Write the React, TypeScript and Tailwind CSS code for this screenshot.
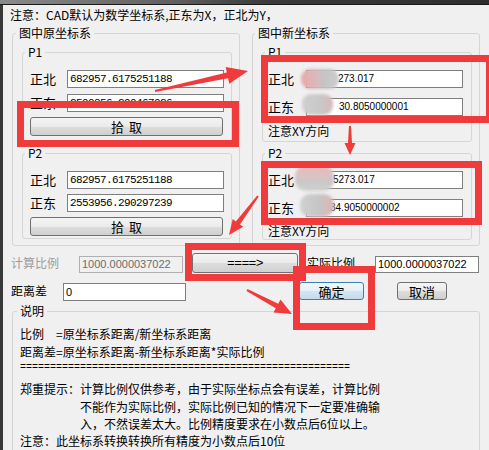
import React from 'react';

const RED = '#ef3b3b';

type Arrow = { x1: number; y1: number; x2: number; y2: number; head: number; wing: number; tail: number; neck: number };

// tapered annotation arrow: thin tail, wide head
function arrowPoints(a: Arrow) {
  const dx = a.x2 - a.x1;
  const dy = a.y2 - a.y1;
  const len = Math.hypot(dx, dy);
  const ux = dx / len;
  const uy = dy / len;
  const nx = -uy;
  const ny = ux;
  const bx = a.x2 - ux * a.head;
  const by = a.y2 - uy * a.head;
  const p = (x: number, y: number) => `${x.toFixed(1)},${y.toFixed(1)}`;
  return [
    p(a.x1 + (nx * a.tail) / 2, a.y1 + (ny * a.tail) / 2),
    p(bx + (nx * a.neck) / 2, by + (ny * a.neck) / 2),
    p(bx + (nx * a.wing) / 2, by + (ny * a.wing) / 2),
    p(a.x2, a.y2),
    p(bx - (nx * a.wing) / 2, by - (ny * a.wing) / 2),
    p(bx - (nx * a.neck) / 2, by - (ny * a.neck) / 2),
    p(a.x1 - (nx * a.tail) / 2, a.y1 - (ny * a.tail) / 2),
  ].join(' ');
}

const arrows: Arrow[] = [
  { x1: 155, y1: 91, x2: 248, y2: 71, head: 21, wing: 17, tail: 2, neck: 6 },
  { x1: 350, y1: 126, x2: 350, y2: 155, head: 12, wing: 11, tail: 2, neck: 4 },
  { x1: 258, y1: 196, x2: 229, y2: 235, head: 15, wing: 13, tail: 2, neck: 5 },
  { x1: 247, y1: 290, x2: 292, y2: 314, head: 17, wing: 15, tail: 2, neck: 5 },
];

const box = 'h-[18px] border border-[#7f7f7f] bg-white';
const mono = "pl-[2px] font-['Liberation_Mono',monospace] text-[11px] leading-[16px] tracking-[-0.6px]";
const sans = "font-['Liberation_Sans',sans-serif] text-[10px] leading-[16px]";
const btn =
  'rounded-[3px] border border-[#707070] bg-[linear-gradient(#f4f4f4_0%,#ebebeb_50%,#dddddd_51%,#d0d0d0_100%)] text-[13px] leading-none text-black';

function LeftRow({ label, value, top }: { label: string; value: string; top: string }) {
  return (
    <div className={`${top} flex h-[18px] items-center pl-[7px]`}>
      <span className="w-[37px] text-[13px] leading-[18px]">{label}</span>
      <div className={`${box} ${mono} w-[157px]`}>{value}</div>
    </div>
  );
}

function RightRow({ label, value, top, pad }: { label: string; value: string; top: string; pad: string }) {
  return (
    <div className={`${top} flex h-[18px] items-center pl-[5px]`}>
      <span className="w-[38px] text-[13px] leading-[18px]">{label}</span>
      <div className={`${box} ${sans} ${pad} w-[157px]`}>{value}</div>
    </div>
  );
}

export default function App() {
  return (
    <div className="relative h-[450px] w-[489px] overflow-hidden bg-[#f0f0f0] font-['Noto_Sans_CJK_SC',sans-serif] text-[12px] text-black">
      <div className="h-[5px] border-b border-[#1a1a1a] bg-[linear-gradient(90deg,#8a8a8a,#606060_35%,#3a3a3a_55%,#2e2e2e)]" />
      <div className="flex h-[445px]">
        <div className="w-[3px] bg-[#383838]" />
        <div className="flex-1">
          <div className="mt-[2px] pl-[7px] leading-[16px]">注意：CAD默认为数学坐标系,正东为X，正北为Y，</div>

          <div className="mt-[3px] flex">
            {/* 原坐标系 */}
            <fieldset className="ml-[9px] h-[220px] w-[228px] rounded-[3px] border border-[#d5d5d5]">
              <legend className="ml-[3px] px-[3px] text-[12px] leading-[14px]">图中原坐标系</legend>
              <fieldset className="ml-[9px] mt-[5px] h-[97px] w-[210px] rounded-[3px] border border-[#d5d5d5]">
                <legend className="ml-[2px] px-[3px] text-[12px] leading-[14px]">P1</legend>
                <LeftRow top="mt-[11px]" label="正北" value="682957.6175251188" />
                <LeftRow top="mt-[6px]" label="正东" value="2500856.290467026" />
                <button className={`${btn} ml-[7px] mt-[5px] flex h-[19px] w-[193px] items-center justify-center gap-[5px]`}>
                  <span>拾</span>
                  <span>取</span>
                </button>
              </fieldset>
              <fieldset className="ml-[9px] mt-[4px] h-[93px] w-[210px] rounded-[3px] border border-[#d5d5d5]">
                <legend className="ml-[2px] px-[3px] text-[12px] leading-[14px]">P2</legend>
                <LeftRow top="mt-[11px]" label="正北" value="682957.6175251188" />
                <LeftRow top="mt-[5px]" label="正东" value="2553956.290297239" />
                <button className={`${btn} ml-[7px] mt-[5px] flex h-[19px] w-[193px] items-center justify-center gap-[5px]`}>
                  <span>拾</span>
                  <span>取</span>
                </button>
              </fieldset>
            </fieldset>

            {/* 新坐标系 */}
            <fieldset className="ml-[12px] h-[220px] w-[228px] rounded-[3px] border border-[#d5d5d5]">
              <legend className="ml-[2px] px-[3px] text-[12px] leading-[14px]">图中新坐标系</legend>
              <fieldset className="ml-[9px] mt-[5px] h-[97px] w-[210px] rounded-[3px] border border-[#d5d5d5]">
                <legend className="ml-[2px] px-[3px] text-[12px] leading-[14px]">P1</legend>
                <RightRow top="mt-[11px]" label="正北" value="273.017" pad="pl-[31px]" />
                <RightRow top="mt-[10px]" label="正东" value="30.8050000001" pad="pl-[32px]" />
                <div className="mt-[8px] pl-[5px] text-[12px] leading-[14px]">注意XY方向</div>
              </fieldset>
              <fieldset className="ml-[9px] mt-[4px] h-[94px] w-[210px] rounded-[3px] border border-[#d5d5d5]">
                <legend className="ml-[2px] px-[3px] text-[12px] leading-[14px]">P2</legend>
                <RightRow top="mt-[11px]" label="正北" value="5273.017" pad="pl-[26px]" />
                <RightRow top="mt-[10px]" label="正东" value="34.9050000002" pad="pl-[23px]" />
                <div className="mt-[7px] pl-[5px] text-[12px] leading-[14px]">注意XY方向</div>
              </fieldset>
            </fieldset>
          </div>

          {/* 计算比例 row */}
          <div className="mt-[7px] flex h-[20px] items-start pl-[8px]">
            <span className="w-[68px] text-[12px] leading-[20px] text-[#9c9c9c]">计算比例</span>
            <div className="mt-[3px] h-[17px] w-[104px] border border-[#b0b0b0] bg-[#f0f0f0] pl-[2px] font-['Liberation_Sans',sans-serif] text-[11px] leading-[15px] text-[#6d6d6d]">
              1000.0000037022
            </div>
            <button className={`${btn} ml-[9px] h-[20px] w-[106px] font-['Liberation_Mono',monospace] text-[11px] tracking-[-0.6px]`}>====&gt;</button>
            <span className="ml-[9px] w-[68px] text-[12px] leading-[20px]">实际比例</span>
            <div className="mt-[3px] h-[17px] w-[104px] border border-[#7f7f7f] bg-white pl-[2px] font-['Liberation_Sans',sans-serif] text-[11px] leading-[15px]">
              1000.0000037022
            </div>
          </div>

          {/* 距离差 row */}
          <div className="mt-[8px] flex h-[20px] items-start pl-[8px]">
            <span className="w-[52px] text-[12px] leading-[20px]">距离差</span>
            <div className="mt-[2px] h-[18px] w-[123px] border border-[#7f7f7f] bg-white pl-[2px] font-['Liberation_Sans',sans-serif] text-[11px] leading-[16px]">0</div>
            <button className="ml-[113px] mt-[1px] h-[18px] w-[65px] rounded-[3px] border border-[#3c7fb1] bg-[linear-gradient(#f1f8fd_0%,#e3f0f8_50%,#d2e6f2_51%,#c6dcea_100%)] text-[13px] leading-none">
              确定
            </button>
            <button className={`${btn} ml-[33px] mt-[1px] h-[18px] w-[50px]`}>取消</button>
          </div>

          {/* 说明 */}
          <fieldset className="ml-[9px] mt-[3px] h-[160px] w-[468px] rounded-[3px] border border-[#d5d5d5]">
            <legend className="ml-[4px] px-[3px] text-[12px] leading-[14px]">说明</legend>
            <div className="pl-[7px] pt-[7px] text-[12px]">
              <div className="flex h-[18px] leading-[18px]">
                <span className="w-[36px]">比例</span>
                <span>=原坐标系距离/新坐标系距离</span>
              </div>
              <div className="h-[17px] leading-[17px]">距离差=原坐标系距离-新坐标系距离*实际比例</div>
              <div className="h-[16px] font-['Liberation_Mono',monospace] text-[10px] leading-[16px]">
                =======================================================
              </div>
              <div className="mt-[4px] flex">
                <span className="w-[60px] leading-[18px]">郑重提示：</span>
                <div>
                  <div className="h-[18px] leading-[18px]">计算比例仅供参考，由于实际坐标点会有误差，计算比例</div>
                  <div className="h-[17px] leading-[17px]">不能作为实际比例，实际比例已知的情况下一定要准确输</div>
                  <div className="h-[17px] leading-[17px]">入，不然误差太大。比例精度要求在小数点后6位以上。</div>
                </div>
              </div>
              <div className="h-[18px] leading-[18px]">注意：此坐标系转换转换所有精度为小数点后10位</div>
            </div>
          </fieldset>
        </div>
      </div>

      {/* blurred-out digits */}
      <div className="absolute left-[301px] top-[69px] h-[20px] w-[38px] rounded-[9px] bg-[linear-gradient(90deg,#e6a9ab,#d8bcbc_45%,#c4c4c4_60%,#cdcdcd)] blur-[1.5px]" />
      <div className="absolute left-[302px] top-[94px] h-[21px] w-[31px] rounded-[9px] bg-[linear-gradient(90deg,#cfcfcf,#c8c8c8_60%,#d9b9ba)] blur-[1.5px]" />
      <div className="absolute left-[295px] top-[166px] h-[25px] w-[39px] rounded-[10px] bg-[linear-gradient(#e8b8b9,#d9c4c4_45%,#c7c7c7_60%,#d2d2d2)] blur-[1.5px]" />
      <div className="absolute left-[300px] top-[194px] h-[23px] w-[34px] rounded-[10px] bg-[linear-gradient(90deg,#d0d0d0,#c6c6c6_55%,#deb3b4)] blur-[1.5px]" />

      {/* red annotation frames */}
      <div className="absolute left-[17px] top-[101px] h-[46px] w-[222px] border-[7px] border-[#ef3b3b]" />
      <div className="absolute left-[261px] top-[55px] h-[68px] w-[232px] border-[7px] border-[#ef3b3b]" />
      <div className="absolute left-[261px] top-[161px] h-[64px] w-[221px] border-[7px] border-[#ef3b3b]" />
      <div className="absolute left-[185px] top-[243px] h-[38px] w-[121px] border-[7px] border-[#ef3b3b]" />
      <div className="absolute left-[293px] top-[266px] h-[64px] w-[82px] border-[7px] border-[#ef3b3b]" />

      <svg className="pointer-events-none absolute left-0 top-0" width={489} height={450}>
        {arrows.map((a, i) => (
          <polygon key={i} points={arrowPoints(a)} fill={RED} />
        ))}
      </svg>
    </div>
  );
}
